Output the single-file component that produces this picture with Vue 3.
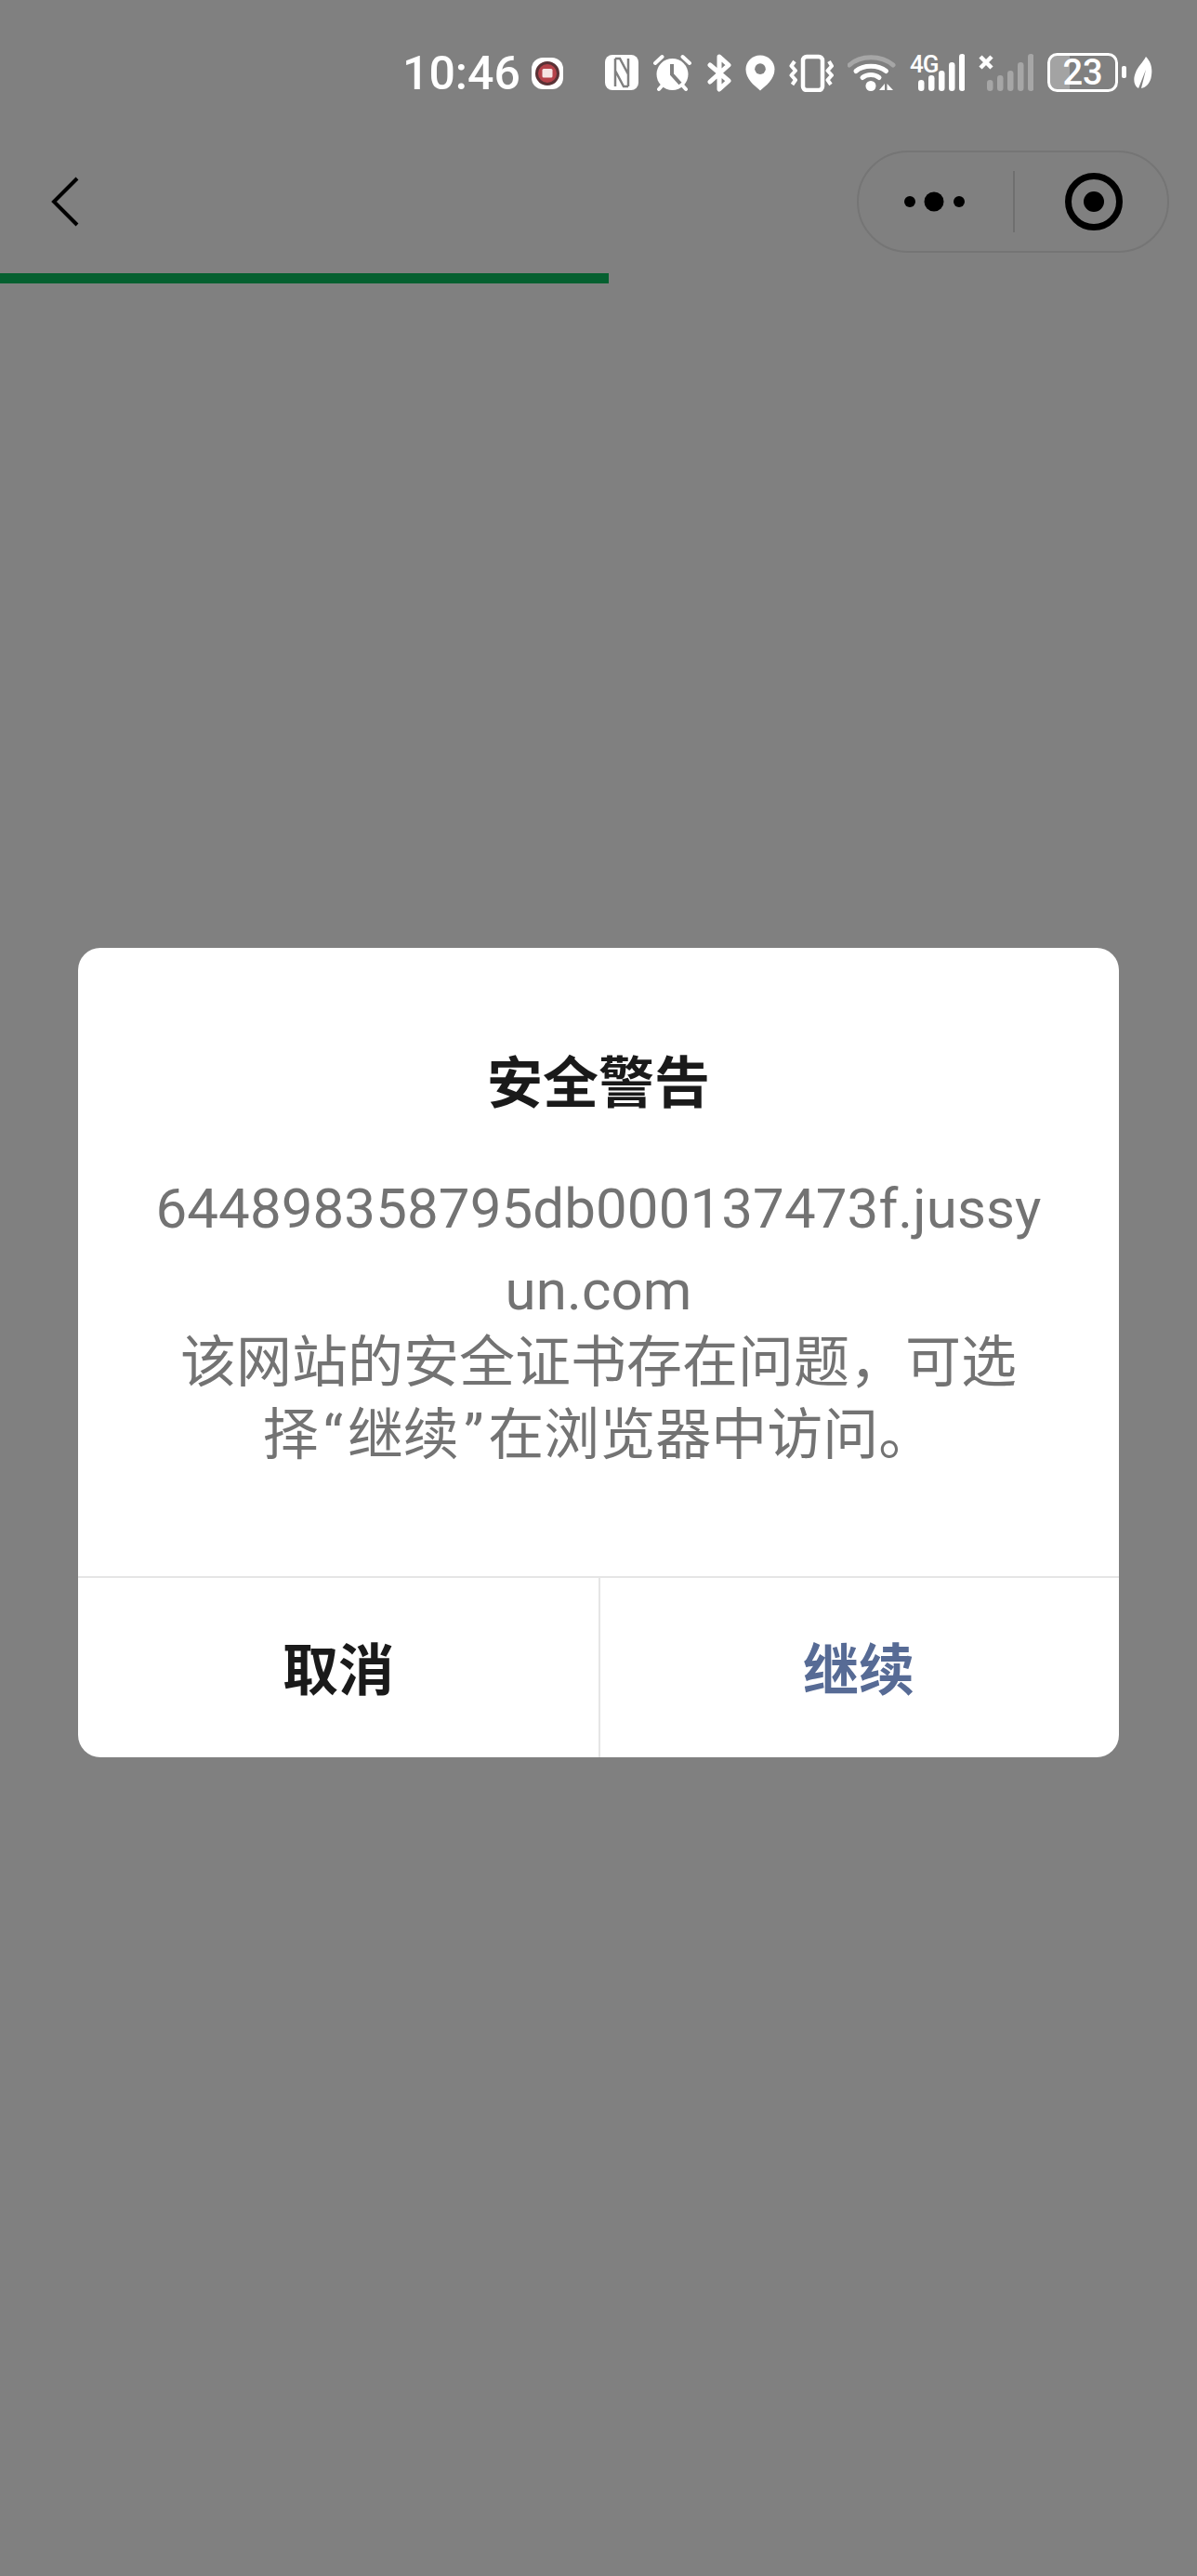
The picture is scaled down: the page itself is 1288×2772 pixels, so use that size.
<script setup>
const signalBars = [
  { x: 0, y: 28, h: 12 },
  { x: 11, y: 23, h: 17 },
  { x: 22, y: 18, h: 22 },
  { x: 33, y: 9, h: 31 },
  { x: 44, y: 0, h: 40 }
]
</script>

<template>
  <div class="page">
    <div class="status-bar">
      <span class="time">10:46</span>
      <svg class="rec" width="34" height="34" viewBox="0 0 34 34">
        <rect width="34" height="34" rx="12" fill="#fff" />
        <circle cx="17" cy="17" r="13" fill="#5a3236" />
        <circle cx="17" cy="17" r="10" fill="#b5424a" />
        <rect x="11.500" y="12" width="11" height="9.500" rx="1.500" fill="#f6e4e4" />
      </svg>

      <div class="status-icons">
        <!-- NFC -->
        <svg width="37" height="40" viewBox="0 0 37 40">
          <rect y="1" width="36" height="38" rx="8" fill="#fff" />
          <path d="M11 5V35M25 5V35M11 5H16L25 22M25 35H20L11 18" fill="none" stroke="#808080" stroke-width="2.500" />
        </svg>
        <!-- alarm -->
        <svg width="43" height="41" viewBox="0 0 43 41">
          <circle cx="20.500" cy="22" r="17" fill="#fff" />
          <path d="M2 10L9.500 3M39 10L31.500 3M6 38L10 33.500M35 38L31 33.500" stroke="#fff" stroke-width="4" stroke-linecap="round" />
          <path d="M20 11V22L29 32" fill="none" stroke="#808080" stroke-width="4" />
        </svg>
        <!-- bluetooth -->
        <svg width="26" height="41" viewBox="0 0 26 41">
          <path d="M3 12L23 29L13 38V3L23 12L3 30" fill="none" stroke="#fff" stroke-width="5" stroke-linecap="round" stroke-linejoin="round" />
        </svg>
        <!-- location -->
        <svg width="32" height="41" viewBox="0 0 33 41">
          <path d="M16.500 1C7.500 1 .5 8 .5 16.500C.5 27 10 35 16.500 40C23 35 32.500 27 32.500 16.500C32.500 8 25.500 1 16.500 1Z" fill="#fff" />
          <circle cx="16.500" cy="16" r="6" fill="#808080" />
        </svg>
        <!-- vibrate -->
        <svg width="48" height="41" viewBox="0 0 48 41">
          <rect x="15" y="3" width="21" height="36" rx="4" fill="none" stroke="#fff" stroke-width="4.500" />
          <path d="M6 8L2.500 13L7 18L2.500 23L7 28L3.500 33M43 8L46 13L41.500 18L46 23L41.500 28L45 33" fill="none" stroke="#fff" stroke-width="4" stroke-linejoin="round" />
        </svg>
        <!-- wifi -->
        <svg width="52" height="41" viewBox="0 0 52 41">
          <path d="M2 12C14 1 36 1 49 12" fill="none" stroke="#a6a6a6" stroke-width="5" stroke-linecap="round" />
          <path d="M9 18.500C17 11.500 33 11.500 41.500 18.500" fill="none" stroke="#fff" stroke-width="5" stroke-linecap="round" />
          <path d="M16 25.500C21 21.500 29 21.500 34 25.500" fill="none" stroke="#fff" stroke-width="5" stroke-linecap="round" />
          <circle cx="25" cy="34.500" r="5.500" fill="#fff" />
          <path d="M40 32V39H34ZM42.500 32V39H49Z" fill="#fff" />
        </svg>
        <!-- 4G + bars -->
        <svg width="59" height="41" viewBox="0 0 59 41">
          <text x="0" y="20" class="net-label">4G</text>
          <rect v-for="b in signalBars" :key="b.x" :x="b.x + 9" :y="b.y" width="6.500" :height="b.h" rx="3.250" fill="#fff" />
        </svg>
        <!-- no SIM -->
        <svg width="59" height="41" viewBox="0 0 59 41">
          <path d="M2 3L14 15M14 3L2 15" stroke="#fff" stroke-width="4.500" />
          <rect v-for="b in signalBars" :key="b.x" :x="b.x + 9" :y="b.y" width="6.500" :height="b.h" rx="3.250" fill="#a6a6a6" />
        </svg>
        <!-- battery -->
        <svg class="battery" width="86" height="42" viewBox="0 0 86 42">
          <path d="M10 1H24V41H10C5 41 2 38 2 33V9C2 4 5 1 10 1Z" fill="#a3a3a3" />
          <rect x="1.500" y="1.500" width="73" height="39" rx="9" fill="none" stroke="#fff" stroke-width="3" />
          <rect x="80" y="14" width="5" height="13" rx="2" fill="#fff" />
          <text x="38" y="34" class="battery-label">23</text>
        </svg>
        <!-- leaf -->
        <svg class="leaf" width="20" height="36" viewBox="0 0 20 36">
          <path d="M13 0C19 6 20 13 19 20C18 29 13 33 8 34L13 14L5 34C0 31 -1 24 2 17C4 11 10 6 13 0Z" fill="#fff" />
        </svg>
      </div>
    </div>

    <div class="nav-bar">
      <svg width="30" height="54" viewBox="0 0 30 54">
        <path d="M28 2L3 27L28 52" fill="none" stroke="#000" stroke-width="4" />
      </svg>
      <div class="capsule">
        <svg width="66" height="24" viewBox="0 0 66 24">
          <circle cx="6" cy="12" r="6" />
          <circle cx="32" cy="12" r="10.500" />
          <circle cx="59" cy="12" r="6" />
        </svg>
        <span class="capsule-line"></span>
        <svg class="target" width="62" height="62" viewBox="0 0 62 62">
          <circle cx="31" cy="31" r="27.500" fill="none" stroke="#000" stroke-width="7" />
          <circle cx="31" cy="31" r="11" />
        </svg>
      </div>
    </div>

    <div class="progress"></div>

    <div class="dialog">
      <div class="dialog-body">
        <div class="dialog-title">安全警告</div>
        <div class="dialog-text">
          <span class="url-line">644898358795db000137473f.jussy</span>
          <span class="url-line">un.com</span>
          <span class="msg-line">该网站的安全证书存在问题，可选</span>
          <span class="msg-line">择<span class="quote">“</span>继续<span class="quote">”</span>在浏览器中访问。</span>
        </div>
      </div>
      <div class="dialog-footer">
        <div class="btn">取消</div>
        <div class="btn btn-primary">继续</div>
      </div>
    </div>
  </div>
</template>

<style scoped>
.page {
  width: 1288px;
  height: 2772px;
  background: #808080;
  overflow: hidden;
  font-family: Roboto, "Noto Sans CJK SC", sans-serif;
}

.status-bar {
  height: 162px;
  box-sizing: border-box;
  padding: 58px 0 0 433px;
  display: flex;
  align-items: flex-start;
}

.time {
  margin-top: -9px;
  font-size: 50px;
  line-height: 60px;
  font-weight: 500;
  color: #fff;
  white-space: nowrap;
}

.rec {
  margin: 4px 0 0 12px;
  flex: none;
}

.status-icons {
  display: flex;
  align-items: flex-start;
  gap: 15px;
  margin-left: 45px;
  flex: none;
}

.net-label {
  font-size: 26px;
  font-weight: 500;
  letter-spacing: -1px;
  fill: #fff;
}

.battery-label {
  font-size: 38px;
  font-weight: 500;
  text-anchor: middle;
  fill: #fff;
}

.battery {
  margin-top: -1px;
}

.leaf {
  margin: 3px 0 0 -8px;
}

.nav-bar {
  height: 110px;
  padding: 0 30px 0 55px;
  display: flex;
  align-items: center;
  justify-content: space-between;
}

.capsule {
  width: 336px;
  height: 110px;
  box-sizing: border-box;
  border: 2px solid #757575;
  border-radius: 55px;
  display: flex;
  align-items: center;
  padding-left: 49px;
}

.capsule-line {
  width: 2px;
  height: 66px;
  margin-left: 51px;
  background: #6f6f6f;
}

.target {
  margin-left: 54px;
}

.progress {
  width: 655px;
  height: 11px;
  margin-top: 22px;
  background: #056030;
}

.dialog {
  width: 1120px;
  height: 871px;
  margin: 715px 0 0 84px;
  background: #fff;
  border-radius: 24px;
  display: flex;
  flex-direction: column;
  overflow: hidden;
}

.dialog-body {
  flex: 1;
  padding-top: 107px;
  text-align: center;
}

.dialog-title {
  font-size: 60px;
  line-height: 80px;
  font-weight: 700;
  color: #1a1a1a;
}

.dialog-text {
  margin-top: 50px;
  font-size: 60px;
  color: #737373;
}

.url-line {
  display: block;
  line-height: 88px;
  letter-spacing: 0.1px;
}

.msg-line {
  display: block;
  line-height: 80px;
}

.url-line + .msg-line {
  margin-top: -6px;
}

.msg-line + .msg-line {
  margin-top: -2px;
}

.quote {
  padding: 0 5px;
}

.dialog-footer {
  height: 195px;
  display: flex;
  border-top: 2px solid #e5e5e5;
  box-sizing: border-box;
  padding-bottom: 5px;
}

.btn {
  flex: 1;
  display: flex;
  align-items: center;
  justify-content: center;
  font-size: 60px;
  font-weight: 700;
  color: #1a1a1a;
}

.btn-primary {
  color: #576b95;
  position: relative;
}

/* the split line runs the full footer height, past the label padding */
.btn-primary::before {
  content: "";
  position: absolute;
  left: 0;
  top: 0;
  bottom: -5px;
  width: 2px;
  background: #e5e5e5;
}
</style>
